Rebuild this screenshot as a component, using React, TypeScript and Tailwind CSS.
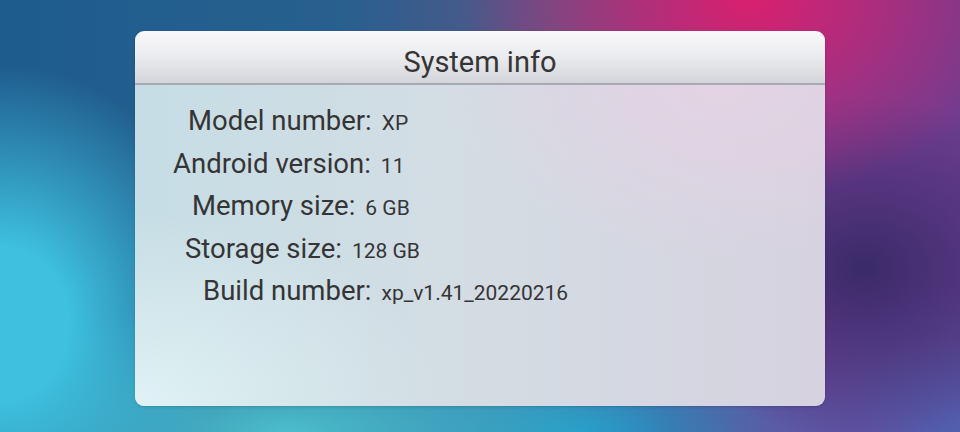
const ROWS = [
  { label: "Model number:", value: "XP", pad: "pl-[53px]" },
  { label: "Android version:", value: "11", pad: "pl-[38px]" },
  { label: "Memory size:", value: "6 GB", pad: "pl-[57px]" },
  { label: "Storage size:", value: "128 GB", pad: "pl-[50px]" },
  { label: "Build number:", value: "xp_v1.41_20220216", pad: "pl-[68px]" },
];

function InfoRow({ label, value, pad }: { label: string; value: string; pad: string }) {
  return (
    <div className={`flex items-baseline h-[42.5px] ${pad}`}>
      <span className="text-[27.5px] leading-[42.5px] text-[#353535]">{label}</span>
      <span className="ml-[10px] text-[21px] text-[#353535]">{value}</span>
    </div>
  );
}

export default function App() {
  return (
    <div
      className="w-[960px] h-[432px] overflow-hidden pt-[31px] pl-[135px] font-['Roboto',_'Liberation_Sans',_sans-serif] bg-[radial-gradient(ellipse_30%_45%_at_78%_0%,#d8206e_0%,rgba(216,32,110,0)_100%),radial-gradient(ellipse_22%_40%_at_90%_62%,#3a2b6a_0%,rgba(58,43,106,0)_100%),radial-gradient(ellipse_25%_35%_at_100%_100%,#5060ae_0%,rgba(80,96,174,0)_100%),radial-gradient(ellipse_24%_60%_at_0%_75%,#3ec0de_0%,#3ec0de_30%,rgba(62,192,222,0)_100%),radial-gradient(ellipse_40%_30%_at_30%_100%,#4cbecc_0%,rgba(76,190,204,0)_100%),radial-gradient(ellipse_30%_25%_at_60%_100%,#1c98c8_0%,rgba(28,152,200,0)_100%),linear-gradient(to_right,#1e5c8e_0%,#27608e_35%,#5a5688_58%,#7a3e92_80%,#6c3e90_100%)]"
    >
      <div className="w-[690px] h-[375px] rounded-[9px] overflow-hidden flex flex-col shadow-[0_1px_3px_rgba(0,0,0,0.15)]">
        <div className="h-[54px] shrink-0 flex items-center justify-center pt-[11px] bg-[linear-gradient(to_bottom,#f9f9fb_0%,#eaebee_50%,#d3d5da_100%)] border-b-2 border-[#a9a9b1]">
          <span className="text-[29px] text-[#353535]">System info</span>
        </div>
        <div className="flex-1 pt-[15px] bg-[radial-gradient(ellipse_45%_60%_at_0%_100%,#e0f2f4_0%,rgba(224,242,244,0)_100%),radial-gradient(ellipse_40%_55%_at_85%_0%,#e4d3e4_0%,rgba(228,211,228,0)_100%),linear-gradient(to_right,#c6dde5_0%,#d3dde4_45%,#d6d2df_100%)]">
          {ROWS.map((r) => (
            <InfoRow key={r.label} label={r.label} value={r.value} pad={r.pad} />
          ))}
        </div>
      </div>
    </div>
  );
}
